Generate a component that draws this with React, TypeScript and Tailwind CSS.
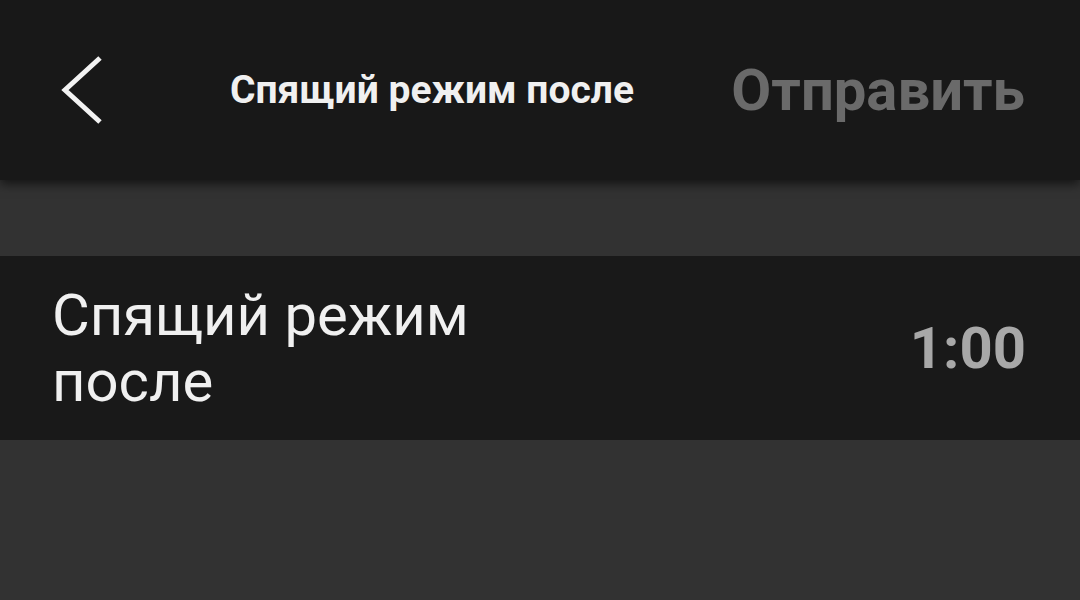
import React from "react";

export default function App() {
  return (
    <div className="w-[1080px] h-[600px] bg-[#323232] overflow-hidden flex flex-col">
      <div className="relative z-10 h-[180px] bg-[#181818] shadow-[0_4px_10px_rgba(0,0,0,0.6)] flex items-center pl-[52px] pr-[55px]">
        <svg width="60" height="80" viewBox="0 0 60 80" className="shrink-0">
          <polyline points="48,8 13,40 48,72" fill="none" stroke="#f2f2f2" strokeWidth="5" strokeLinecap="butt" strokeLinejoin="miter" />
        </svg>
        <div className="ml-[118px] text-[#f0f0f0] text-[39px] font-bold font-['Roboto',sans-serif]">
          Спящий режим после
        </div>
        <div className="ml-auto text-[#6a6a6a] text-[58px] font-bold font-['Roboto',sans-serif]">
          Отправить
        </div>
      </div>
      <div className="h-[76px]" />
      <div className="h-[184px] bg-[#191919] flex items-center justify-between pl-[52px] pr-[54px]">
        <div className="text-[#f0f0f0] text-[58px] leading-[66px] font-['Roboto',sans-serif]">
          Спящий режим
          <br />
          после
        </div>
        <div className="text-[#a8a8a8] text-[58px] font-bold font-['Roboto',sans-serif]">1:00</div>
      </div>
    </div>
  );
}
